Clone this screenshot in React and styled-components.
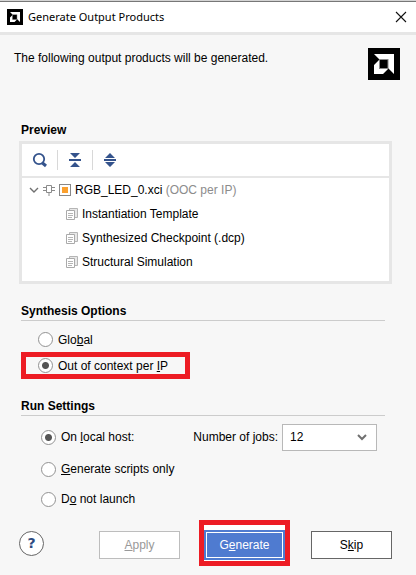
import React from "react";
import styled, { createGlobalStyle, css } from "styled-components";

const GlobalStyle = createGlobalStyle`
  *, *::before, *::after { box-sizing: border-box; }
  body {
    margin: 0;
    background: #f7f7f7;
    color: #000;
    font: 12px/16px "Liberation Sans", Arial, sans-serif;
  }
  button, select, input { font: inherit; margin: 0; }
`;

const Dialog = styled.main`
  display: flex;
  flex-direction: column;
  min-height: 100vh;
  border-top: 1px solid #d4d4d4;
`;

const TitleBar = styled.header`
  display: flex;
  align-items: center;
  height: 34px;
  padding: 0 9px 0 7px;
  background: #fff;
  border-top: 1px solid #777;
  border-bottom: 3px solid #e6e6e6;
`;

const Title = styled.h1`
  flex: 1;
  margin: 0 0 0 5px;
  font: 400 11px/16px "Noto Sans", "Open Sans", sans-serif;
`;

const CloseButton = styled.button`
  display: flex;
  padding: 0;
  border: 0;
  background: none;
`;

const Intro = styled.div`
  display: flex;
  justify-content: space-between;
  align-items: flex-start;
  padding: 13px 16px 0 14px;
`;

const Message = styled.p`
  margin: 2px 0 0;
`;

const Heading = styled.h2`
  margin: 0;
  font-size: 12px;
  line-height: 16px;
  font-weight: 700;
`;

const PreviewSection = styled.section`
  margin: 42px 24px 0 19px;

  ${Heading} { padding-left: 2px; }
`;

const Panel = styled.div`
  margin-top: 3px;
  border: 3px solid #e6e6e6;
  background: #fff;
`;

const Toolbar = styled.div`
  display: flex;
  align-items: center;
  height: 34px;
  border-bottom: 2px solid #e6e6e6;
`;

const ToolButton = styled.button`
  display: flex;
  align-items: center;
  justify-content: center;
  width: 35px;
  height: 20px;
  padding: 0;
  border: 0;
  background: none;

  & + & { border-left: 1px solid #d8d8d8; }
`;

const Tree = styled.ul`
  margin: 0;
  padding: 0 0 7px;
  list-style: none;
`;

const TreeRow = styled.li`
  display: flex;
  align-items: center;
  gap: 4px;
  height: 24px;
  padding-left: ${(p) => (p.$child ? 44 : 7)}px;
  white-space: nowrap;
`;

const Muted = styled.span`
  color: #8c8c8c;
`;

const OptionSection = styled.section`
  margin: 19px 31px 0 21px;
`;

const OptionHeading = styled(Heading)`
  padding-bottom: 1px;
  border-bottom: 1px solid #cccccc;
`;

const OptionRow = styled.div`
  display: flex;
  align-items: center;
  height: ${(p) => p.$height}px;
  padding-top: ${(p) => p.$top || 0}px;
  padding-left: ${(p) => p.$indent}px;
`;

const RadioLabel = styled.label`
  display: flex;
  align-items: center;
  gap: 5px;
  white-space: nowrap;
`;

const Radio = styled.input.attrs({ type: "radio" })`
  appearance: none;
  flex: none;
  width: 15px;
  height: 15px;
  border: 1px solid #929292;
  border-radius: 50%;
  background: #fff;

  &:checked {
    background: radial-gradient(circle, #555 0 3px, #fff 4px);
  }
`;

const highlight = css`
  border: 5px solid #ed1c24;
`;

const HighlightedRow = styled.div`
  ${highlight}
  display: flex;
  align-items: center;
  width: 169px;
  height: 27px;
  padding-left: 12px;
`;

const JobsLabel = styled.label`
  margin-left: auto;
  white-space: nowrap;
`;

const SelectBox = styled.div`
  display: grid;
  align-items: center;
  width: 95px;
  margin: 0 8px 0 4px;

  & > * { grid-area: 1 / 1; }
  & > svg {
    justify-self: end;
    margin-right: 9px;
    pointer-events: none;
  }
`;

const Select = styled.select`
  appearance: none;
  width: 100%;
  height: 27px;
  padding: 0 24px 1px 7px;
  border: 1px solid #b8b8b8;
  border-radius: 0;
  background: #fff;
  color: #000;
`;

const Footer = styled.footer`
  display: flex;
  align-items: center;
  margin-top: 2px;
  padding: 0 24px 5px 19px;
`;

const HelpButton = styled.button`
  width: 25px;
  height: 25px;
  padding: 0;
  border: 1px solid #666;
  border-radius: 50%;
  background: #fff;
  color: #2d4a80;

  && {
    margin: 0 auto 4px 0;
    font: 700 14px/16px "DejaVu Sans", sans-serif;
  }
`;

const Button = styled.button`
  width: 81px;
  height: 28px;
  padding: 0;
  border: 1px solid #666;
  background: #fff;
  color: #000;

  &:disabled {
    border-color: #bdbdbd;
    color: #999;
  }
`;

const PrimaryButton = styled(Button)`
  height: 30px;
  border: 2px solid #4f7bd0;
  background: #4f7bd0;
  box-shadow: inset 0 0 0 1px #fff;
  color: #fff;
`;

const PrimaryHighlight = styled.div`
  ${highlight}
  display: flex;
  margin: 0 21px 4px 19px;
  padding: 5px 0 1px;
  background: #fff;
`;

function Logo({ size }) {
  return (
    <svg width={size} height={size} viewBox="0 0 32 32" aria-hidden="true">
      <rect width="32" height="32" fill="#000" />
      <path d="M6 6H26V26L20 20V12H12Z" fill="#fff" />
      <path d="M11 12V21H20L15 26H6V17Z" fill="#fff" />
      <rect x="11.5" y="11.5" width="8.5" height="9" fill="#000" stroke="#888" />
    </svg>
  );
}

function CloseIcon() {
  return (
    <svg width="12" height="12" viewBox="0 0 12 12" aria-hidden="true">
      <path d="M1 1L11 11M11 1L1 11" stroke="#111" strokeWidth="1.1" />
    </svg>
  );
}

function SearchIcon() {
  return (
    <svg width="16" height="16" viewBox="0 0 16 16" aria-hidden="true">
      <circle cx="7" cy="7" r="5.2" fill="none" stroke="#34538c" strokeWidth="1.8" />
      <path d="M10.5 11L14 14" stroke="#34538c" strokeWidth="3" />
    </svg>
  );
}

function CollapseIcon() {
  return (
    <svg width="14" height="16" viewBox="0 0 14 16" aria-hidden="true">
      <path d="M2 1H12L7 6ZM2 15H12L7 10ZM1 7H13V9H1Z" fill="#34538c" />
    </svg>
  );
}

function ExpandIcon() {
  return (
    <svg width="14" height="16" viewBox="0 0 14 16" aria-hidden="true">
      <path d="M7 1L12 6H2ZM7 15L12 10H2ZM1 7H13V9H1Z" fill="#34538c" />
    </svg>
  );
}

function Chevron({ width, stroke }) {
  return (
    <svg width={width} height="8" viewBox="0 0 10 8" aria-hidden="true">
      <path d="M1 2L5 6L9 2" fill="none" stroke="#707070" strokeWidth={stroke} />
    </svg>
  );
}

function ChipIcon() {
  return (
    <svg width="12" height="12" viewBox="0 0 12 12" aria-hidden="true">
      <path
        d="M3.5 1.5H8.5V8.5H3.5ZM0 3.5H3.5M0 6.5H3.5M8.5 3.5H12M8.5 6.5H12M6 8.5V12"
        fill="none"
        stroke="#8b8b8b"
      />
    </svg>
  );
}

function SourceIcon() {
  return (
    <svg width="12" height="12" viewBox="0 0 12 12" aria-hidden="true">
      <rect x="0.5" y="0.5" width="11" height="11" fill="#fff" stroke="#888" />
      <rect x="3" y="3" width="6" height="6" fill="#fba02e" />
    </svg>
  );
}

function FilesIcon() {
  return (
    <svg width="12" height="12" viewBox="0 0 12 12" aria-hidden="true">
      <path d="M3.5 2.5V0.5H11.5V9.5H8.5" fill="#e8e8e8" stroke="#b5b5b5" />
      <path d="M0.5 2.5H8.5V11.5H0.5Z" fill="#fff" stroke="#aaa" />
      <path d="M2 5.5H7M2 7.5H7M2 9.5H6" stroke="#b5b5b5" />
    </svg>
  );
}

const outputs = ["Instantiation Template", "Synthesized Checkpoint (.dcp)", "Structural Simulation"];

export default function App() {
  return (
    <>
      <GlobalStyle />
      <Dialog>
        <TitleBar>
          <Logo size={16} />
          <Title>Generate Output Products</Title>
          <CloseButton aria-label="Close"><CloseIcon /></CloseButton>
        </TitleBar>

        <Intro>
          <Message>The following output products will be generated.</Message>
          <Logo size={32} />
        </Intro>

        <PreviewSection>
          <Heading>Preview</Heading>
          <Panel>
            <Toolbar>
              <ToolButton aria-label="Search"><SearchIcon /></ToolButton>
              <ToolButton aria-label="Collapse all"><CollapseIcon /></ToolButton>
              <ToolButton aria-label="Expand all"><ExpandIcon /></ToolButton>
            </Toolbar>
            <Tree>
              <TreeRow>
                <Chevron width={10} stroke={1.4} />
                <ChipIcon />
                <SourceIcon />
                <span>RGB_LED_0.xci <Muted>(OOC per IP)</Muted></span>
              </TreeRow>
              {outputs.map((name) => (
                <TreeRow key={name} $child>
                  <FilesIcon />
                  <span>{name}</span>
                </TreeRow>
              ))}
            </Tree>
          </Panel>
        </PreviewSection>

        <OptionSection>
          <OptionHeading>Synthesis Options</OptionHeading>
          <OptionRow $height={31} $top={6} $indent={17}>
            <RadioLabel>
              <Radio name="synthesis" />
              <span>Glo<u>b</u>al</span>
            </RadioLabel>
          </OptionRow>
          <HighlightedRow>
            <RadioLabel>
              <Radio name="synthesis" defaultChecked />
              <span>Out of context per <u>I</u>P</span>
            </RadioLabel>
          </HighlightedRow>
        </OptionSection>

        <OptionSection>
          <OptionHeading>Run Settings</OptionHeading>
          <OptionRow $height={42} $indent={20}>
            <RadioLabel>
              <Radio name="run" defaultChecked />
              <span>On <u>l</u>ocal host:</span>
            </RadioLabel>
            <JobsLabel htmlFor="jobs">Number of jobs:</JobsLabel>
            <SelectBox>
              <Select id="jobs" defaultValue="12">
                <option>4</option>
                <option>8</option>
                <option>12</option>
              </Select>
              <Chevron width={12} stroke={2} />
            </SelectBox>
          </OptionRow>
          <OptionRow $height={22} $indent={20}>
            <RadioLabel>
              <Radio name="run" />
              <span><u>G</u>enerate scripts only</span>
            </RadioLabel>
          </OptionRow>
          <OptionRow $height={38} $indent={20}>
            <RadioLabel>
              <Radio name="run" />
              <span>D<u>o</u> not launch</span>
            </RadioLabel>
          </OptionRow>
        </OptionSection>

        <Footer>
          <HelpButton aria-label="Help">?</HelpButton>
          <Button disabled><u>A</u>pply</Button>
          <PrimaryHighlight>
            <PrimaryButton>G<u>e</u>nerate</PrimaryButton>
          </PrimaryHighlight>
          <Button>S<u>k</u>ip</Button>
        </Footer>
      </Dialog>
    </>
  );
}
